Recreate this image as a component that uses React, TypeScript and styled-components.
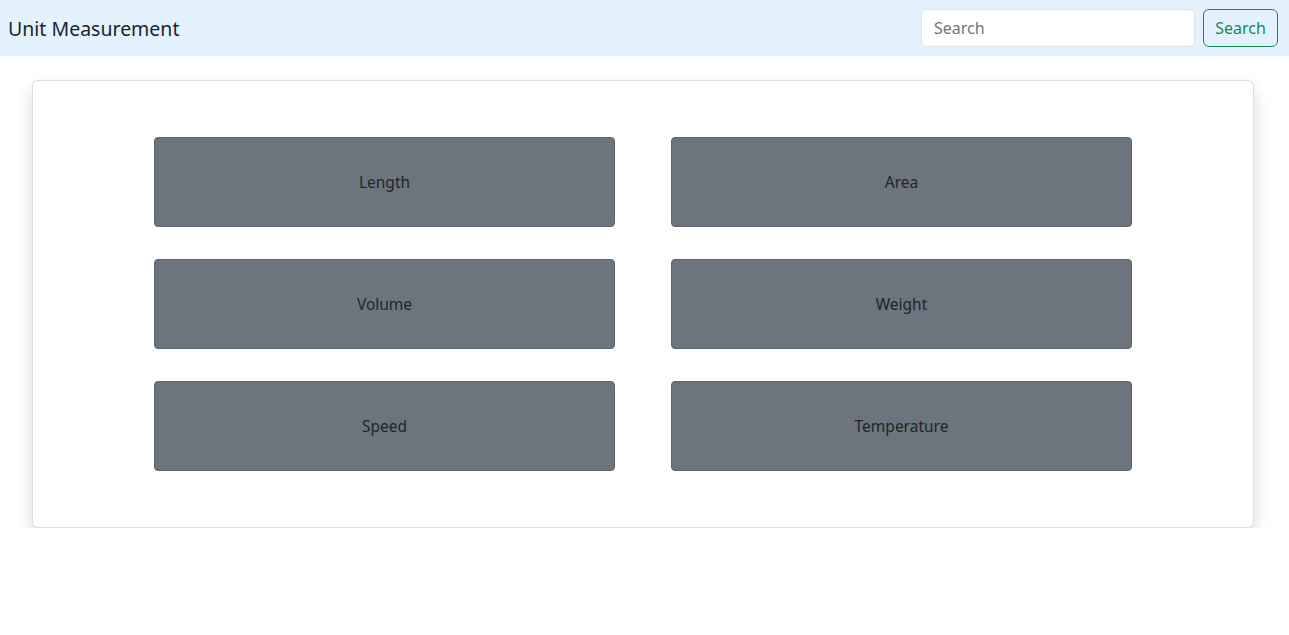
import React from "react";
import styled, { createGlobalStyle } from "styled-components";

const Global = createGlobalStyle`
  html, body { margin: 0; padding: 0; background: #fff; }
  body { font-family: "Noto Sans", "Open Sans", sans-serif; color: #212529; }
  * { box-sizing: border-box; }
`;

const Navbar = styled.nav`
  height: 56px;
  background: #e3f2fd;
  display: flex;
  align-items: center;
  justify-content: space-between;
  padding: 0 11px 0 8px;
`;

const Brand = styled.div`
  font-size: 19.5px;
  color: #212529;
`;

const SearchForm = styled.form`
  display: flex;
  gap: 8px;
  align-items: center;
`;

const SearchInput = styled.input`
  width: 274px;
  height: 38px;
  border: 1px solid #dee2e6;
  border-radius: 6px;
  padding: 0 12px;
  font-family: inherit;
  font-size: 16px;
  color: #212529;
  background: #fff;
  outline: none;
  &::placeholder { color: #6c757d; }
`;

const OutlineButton = styled.button`
  height: 38px;
  width: 75px;
  border: 1px solid #198754;
  border-radius: 6px;
  background: transparent;
  color: #198754;
  font-family: inherit;
  font-size: 16px;
  padding: 0;
`;

const Card = styled.section`
  margin: 24px 35px 0 32px;
  border: 1px solid rgba(0, 0, 0, 0.125);
  border-radius: 6px;
  background: #fff;
  box-shadow: 0 8px 16px rgba(0, 0, 0, 0.15);
  padding: 56px 0;
  display: flex;
  justify-content: center;
`;

const Grid = styled.div`
  display: grid;
  grid-template-columns: 461px 461px;
  column-gap: 56px;
  row-gap: 32px;
`;

const Tile = styled.button`
  height: 90px;
  background: #6c757d;
  border: 1px solid #5c636a;
  border-radius: 4px;
  color: #212529;
  font-family: inherit;
  font-size: 15.5px;
  cursor: pointer;
`;

const items = ["Length", "Area", "Volume", "Weight", "Speed", "Temperature"];

export default function App() {
  return (
    <>
      <Global />
      <Navbar>
        <Brand>Unit Measurement</Brand>
        <SearchForm onSubmit={(e) => e.preventDefault()}>
          <SearchInput placeholder="Search" />
          <OutlineButton type="submit">Search</OutlineButton>
        </SearchForm>
      </Navbar>
      <Card>
        <Grid>
          {items.map((t) => (
            <Tile key={t}>{t}</Tile>
          ))}
        </Grid>
      </Card>
    </>
  );
}
